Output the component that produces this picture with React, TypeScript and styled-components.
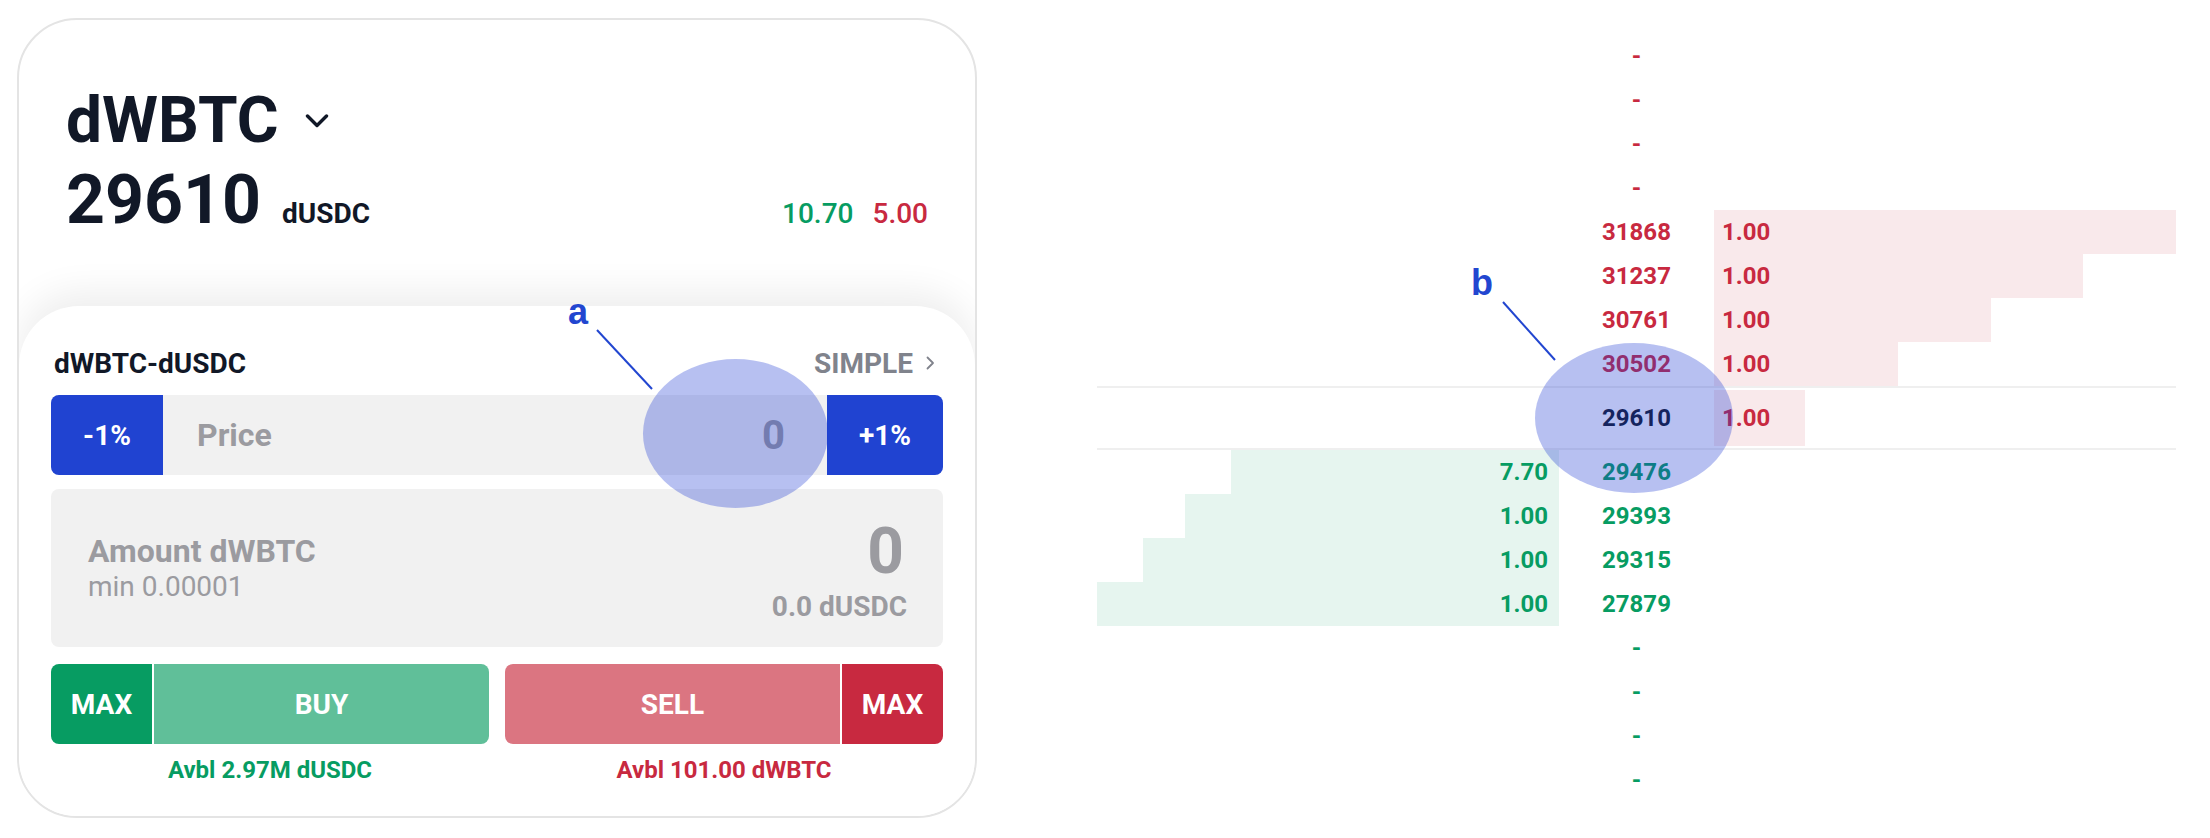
import React from 'react';
import styled, { createGlobalStyle } from 'styled-components';

const GlobalStyle = createGlobalStyle`
  html, body { margin: 0; padding: 0; background: #ffffff; }
  body { font-family: Roboto, "Noto Sans", Arial, sans-serif; }
  * { box-sizing: border-box; }
`;

const C = {
  dark: '#111827',
  gray: '#9b9ba0',
  grayDark: '#80838c',
  field: '#f1f1f1',
  blue: '#2043d1',
  green: '#079c62',
  greenSoft: '#60bf99',
  red: '#c82940',
  redSoft: '#db7581',
  annot: '#2246d0',
};

const Page = styled.div`
  position: relative;
  width: 2210px;
  height: 838px;
  display: flex;
  align-items: flex-start;
  padding: 18px 0 0 17px;
  overflow: hidden;
`;

/* ---------- Trade card ---------- */

const Card = styled.section`
  width: 960px;
  height: 800px;
  border: 2px solid #e4e4e4;
  border-radius: 60px;
  overflow: hidden;
  display: flex;
  flex-direction: column;
  background: #fff;
`;

const Header = styled.header`
  padding: 69px 47px 0 47px;
  display: flex;
  flex-direction: column;
  gap: 13px;
`;

const TitleRow = styled.div`
  display: flex;
  align-items: center;
  gap: 26px;
  height: 64px;
`;

const Title = styled.h1`
  margin: 0;
  font-size: 64px;
  line-height: 1;
  font-weight: 700;
  color: ${C.dark};
`;

const QuoteRow = styled.div`
  display: flex;
  align-items: baseline;
  height: 68px;
`;

const BigPrice = styled.span`
  font-size: 68px;
  line-height: 1;
  font-weight: 700;
  color: ${C.dark};
`;

const Unit = styled.span`
  margin-left: 21px;
  font-size: 28px;
  font-weight: 700;
  color: ${C.dark};
`;

const Stats = styled.div`
  margin-left: auto;
  display: flex;
  gap: 19px;
`;

const Stat = styled.span<{ $tone: 'green' | 'red' }>`
  font-size: 28px;
  font-weight: 500;
  color: ${(p) => (p.$tone === 'green' ? C.green : C.red)};
`;

const Panel = styled.div`
  margin-top: 72px;
  flex: 1;
  border-radius: 60px 60px 0 0;
  background: #fff;
  box-shadow: 0 -14px 36px rgba(0, 0, 0, 0.07);
  padding: 40px 32px 0 32px;
  display: flex;
  flex-direction: column;
`;

const PairRow = styled.div`
  height: 34px;
  display: flex;
  align-items: center;
  justify-content: space-between;
`;

const Pair = styled.span`
  margin-left: 3px;
  font-size: 28px;
  font-weight: 700;
  color: ${C.dark};
`;

const ModeLink = styled.span`
  display: flex;
  align-items: center;
  gap: 13px;
  padding-right: 8px;
  font-size: 28px;
  font-weight: 700;
  color: ${C.grayDark};
`;

const PriceField = styled.div`
  margin-top: 15px;
  height: 80px;
  display: flex;
  border-radius: 8px;
  overflow: hidden;
  background: ${C.field};
`;

const StepButton = styled.button<{ $w: number }>`
  width: ${(p) => p.$w}px;
  border: 0;
  padding: 0;
  background: ${C.blue};
  color: #fff;
  font-family: inherit;
  font-size: 28px;
  font-weight: 700;
`;

const PriceInput = styled.div`
  flex: 1;
  display: flex;
  align-items: center;
  justify-content: space-between;
  padding: 0 42px 0 34px;
`;

const FieldLabel = styled.span`
  font-size: 32px;
  font-weight: 700;
  color: ${C.gray};
`;

const PriceValue = styled.span`
  font-size: 40px;
  font-weight: 700;
  color: ${C.gray};
`;

const AmountBox = styled.div`
  margin-top: 14px;
  height: 158px;
  border-radius: 8px;
  background: ${C.field};
  display: flex;
  align-items: center;
  justify-content: space-between;
  padding: 0 36px 0 37px;
`;

const AmountLeft = styled.div`
  display: flex;
  flex-direction: column;
`;

const AmountLabel = styled.span`
  font-size: 32px;
  line-height: 1.2;
  font-weight: 700;
  color: ${C.gray};
`;

const AmountHint = styled.span`
  font-size: 28px;
  line-height: 1.2;
  font-weight: 400;
  color: ${C.gray};
`;

const AmountRight = styled.div`
  display: flex;
  flex-direction: column;
  align-items: flex-end;
  padding-top: 8px;
`;

const AmountValue = styled.span`
  font-size: 64px;
  line-height: 1;
  font-weight: 700;
  color: ${C.gray};
  margin-right: 3px;
`;

const AmountQuote = styled.span`
  margin-top: 6px;
  font-size: 28px;
  line-height: 1.2;
  font-weight: 700;
  color: ${C.gray};
`;

const Actions = styled.div`
  margin-top: 17px;
  display: grid;
  grid-template-columns: 1fr 1fr;
  gap: 16px;
`;

const ActionCol = styled.div`
  display: flex;
  flex-direction: column;
`;

const ActionGroup = styled.div`
  height: 80px;
  display: flex;
  gap: 2px;
  border-radius: 8px;
  overflow: hidden;
`;

const ActionButton = styled.button<{ $bg: string; $grow?: boolean }>`
  ${(p) => (p.$grow ? 'flex: 1;' : 'width: 101px;')}
  border: 0;
  padding: 0;
  background: ${(p) => p.$bg};
  color: #fff;
  font-family: inherit;
  font-size: 28px;
  font-weight: 700;
`;

const Avbl = styled.div<{ $tone: 'green' | 'red' }>`
  margin-top: 12px;
  text-align: center;
  font-size: 24px;
  font-weight: 700;
  color: ${(p) => (p.$tone === 'green' ? C.green : C.red)};
`;

/* ---------- Order book ---------- */

const Book = styled.section`
  margin: 16px 0 0 120px;
  width: 1079px;
  display: flex;
  flex-direction: column;
  font-size: 24px;
  font-weight: 700;
`;

const BookRow = styled.div<{ $mid?: boolean }>`
  display: grid;
  grid-template-columns: 462px 155px 462px;
  height: ${(p) => (p.$mid ? '64px' : '44px')};
  ${(p) =>
    p.$mid
      ? `border-top: 2px solid #efefef; border-bottom: 2px solid #efefef; padding: 2px 0;`
      : ''}
`;

const SideCell = styled.div<{ $side: 'bid' | 'ask' }>`
  display: flex;
  justify-content: ${(p) => (p.$side === 'bid' ? 'flex-end' : 'flex-start')};
`;

const DepthBar = styled.div<{ $side: 'bid' | 'ask' }>`
  height: 100%;
  display: flex;
  align-items: center;
  justify-content: ${(p) => (p.$side === 'bid' ? 'flex-end' : 'flex-start')};
  padding: ${(p) => (p.$side === 'bid' ? '0 11px 0 0' : '0 0 0 8px')};
  background: ${(p) => (p.$side === 'bid' ? 'rgba(8,158,98,0.1)' : 'rgba(201,40,62,0.1)')};
  color: ${(p) => (p.$side === 'bid' ? C.green : C.red)};
`;

const PriceCell = styled.div<{ $tone: 'green' | 'red' | 'dark' }>`
  display: flex;
  align-items: center;
  justify-content: center;
  color: ${(p) => (p.$tone === 'green' ? C.green : p.$tone === 'red' ? C.red : C.dark)};
`;

/* ---------- Annotations ---------- */

const Highlight = styled.div<{ $x: number; $y: number; $w: number; $h: number }>`
  position: absolute;
  left: ${(p) => p.$x}px;
  top: ${(p) => p.$y}px;
  width: ${(p) => p.$w}px;
  height: ${(p) => p.$h}px;
  border-radius: 50%;
  background: rgba(30, 60, 210, 0.32);
  pointer-events: none;
`;

const Marker = styled.span<{ $x: number; $y: number }>`
  position: absolute;
  left: ${(p) => p.$x}px;
  top: ${(p) => p.$y}px;
  font-family: "Liberation Sans", Arial, sans-serif;
  font-size: 36px;
  line-height: 1;
  font-weight: 700;
  color: ${C.annot};
`;

const LeaderLayer = styled.svg`
  position: absolute;
  left: 0;
  top: 0;
  pointer-events: none;
`;

const ChevronDown = () => (
  <svg width="24" height="14" viewBox="0 0 24 14" fill="none">
    <polyline points="2.5,2 12,11.5 21.5,2" stroke={C.dark} strokeWidth="3.4" strokeLinecap="round" strokeLinejoin="round" />
  </svg>
);

const ChevronRight = () => (
  <svg width="9" height="14" viewBox="0 0 9 14" fill="none">
    <polyline points="1.5,1.5 7,7 1.5,12.5" stroke={C.grayDark} strokeWidth="1.8" strokeLinecap="round" strokeLinejoin="round" />
  </svg>
);

type Level = { price: string; amount?: string; depth?: number };

const asks: Level[] = [
  { price: '-' },
  { price: '-' },
  { price: '-' },
  { price: '-' },
  { price: '31868', amount: '1.00', depth: 462 },
  { price: '31237', amount: '1.00', depth: 369 },
  { price: '30761', amount: '1.00', depth: 277 },
  { price: '30502', amount: '1.00', depth: 184 },
];

const bids: Level[] = [
  { price: '29476', amount: '7.70', depth: 328 },
  { price: '29393', amount: '1.00', depth: 374 },
  { price: '29315', amount: '1.00', depth: 416 },
  { price: '27879', amount: '1.00', depth: 462 },
  { price: '-' },
  { price: '-' },
  { price: '-' },
  { price: '-' },
];

export default function App() {
  return (
    <>
      <GlobalStyle />
      <Page>
        <Card>
          <Header>
            <TitleRow>
              <Title>dWBTC</Title>
              <ChevronDown />
            </TitleRow>
            <QuoteRow>
              <BigPrice>29610</BigPrice>
              <Unit>dUSDC</Unit>
              <Stats>
                <Stat $tone="green">10.70</Stat>
                <Stat $tone="red">5.00</Stat>
              </Stats>
            </QuoteRow>
          </Header>
          <Panel>
            <PairRow>
              <Pair>dWBTC-dUSDC</Pair>
              <ModeLink>
                SIMPLE
                <ChevronRight />
              </ModeLink>
            </PairRow>
            <PriceField>
              <StepButton $w={112}>-1%</StepButton>
              <PriceInput>
                <FieldLabel>Price</FieldLabel>
                <PriceValue>0</PriceValue>
              </PriceInput>
              <StepButton $w={116}>+1%</StepButton>
            </PriceField>
            <AmountBox>
              <AmountLeft>
                <AmountLabel>Amount dWBTC</AmountLabel>
                <AmountHint>min 0.00001</AmountHint>
              </AmountLeft>
              <AmountRight>
                <AmountValue>0</AmountValue>
                <AmountQuote>0.0 dUSDC</AmountQuote>
              </AmountRight>
            </AmountBox>
            <Actions>
              <ActionCol>
                <ActionGroup>
                  <ActionButton $bg={C.green}>MAX</ActionButton>
                  <ActionButton $bg={C.greenSoft} $grow>BUY</ActionButton>
                </ActionGroup>
                <Avbl $tone="green">Avbl 2.97M dUSDC</Avbl>
              </ActionCol>
              <ActionCol>
                <ActionGroup>
                  <ActionButton $bg={C.redSoft} $grow>SELL</ActionButton>
                  <ActionButton $bg={C.red}>MAX</ActionButton>
                </ActionGroup>
                <Avbl $tone="red">Avbl 101.00 dWBTC</Avbl>
              </ActionCol>
            </Actions>
          </Panel>
        </Card>

        <Book>
          {asks.map((l, i) => (
            <BookRow key={`a${i}`}>
              <SideCell $side="bid" />
              <PriceCell $tone="red">{l.price}</PriceCell>
              <SideCell $side="ask">
                {l.amount && (
                  <DepthBar $side="ask" style={{ width: l.depth }}>
                    {l.amount}
                  </DepthBar>
                )}
              </SideCell>
            </BookRow>
          ))}
          <BookRow $mid>
            <SideCell $side="bid" />
            <PriceCell $tone="dark">29610</PriceCell>
            <SideCell $side="ask">
              <DepthBar $side="ask" style={{ width: 91 }}>
                1.00
              </DepthBar>
            </SideCell>
          </BookRow>
          {bids.map((l, i) => (
            <BookRow key={`b${i}`}>
              <SideCell $side="bid">
                {l.amount && (
                  <DepthBar $side="bid" style={{ width: l.depth }}>
                    {l.amount}
                  </DepthBar>
                )}
              </SideCell>
              <PriceCell $tone="green">{l.price}</PriceCell>
              <SideCell $side="ask" />
            </BookRow>
          ))}
        </Book>

        <LeaderLayer width="2210" height="838" viewBox="0 0 2210 838">
          <line x1="597" y1="330" x2="652" y2="389" stroke={C.annot} strokeWidth="2" />
          <line x1="1503" y1="302" x2="1555" y2="360" stroke={C.annot} strokeWidth="2" />
        </LeaderLayer>
        <Marker $x={568} $y={294}>a</Marker>
        <Marker $x={1471} $y={265}>b</Marker>
        <Highlight $x={643} $y={359} $w={185} $h={149} />
        <Highlight $x={1535} $y={343} $w={198} $h={150} />
      </Page>
    </>
  );
}
